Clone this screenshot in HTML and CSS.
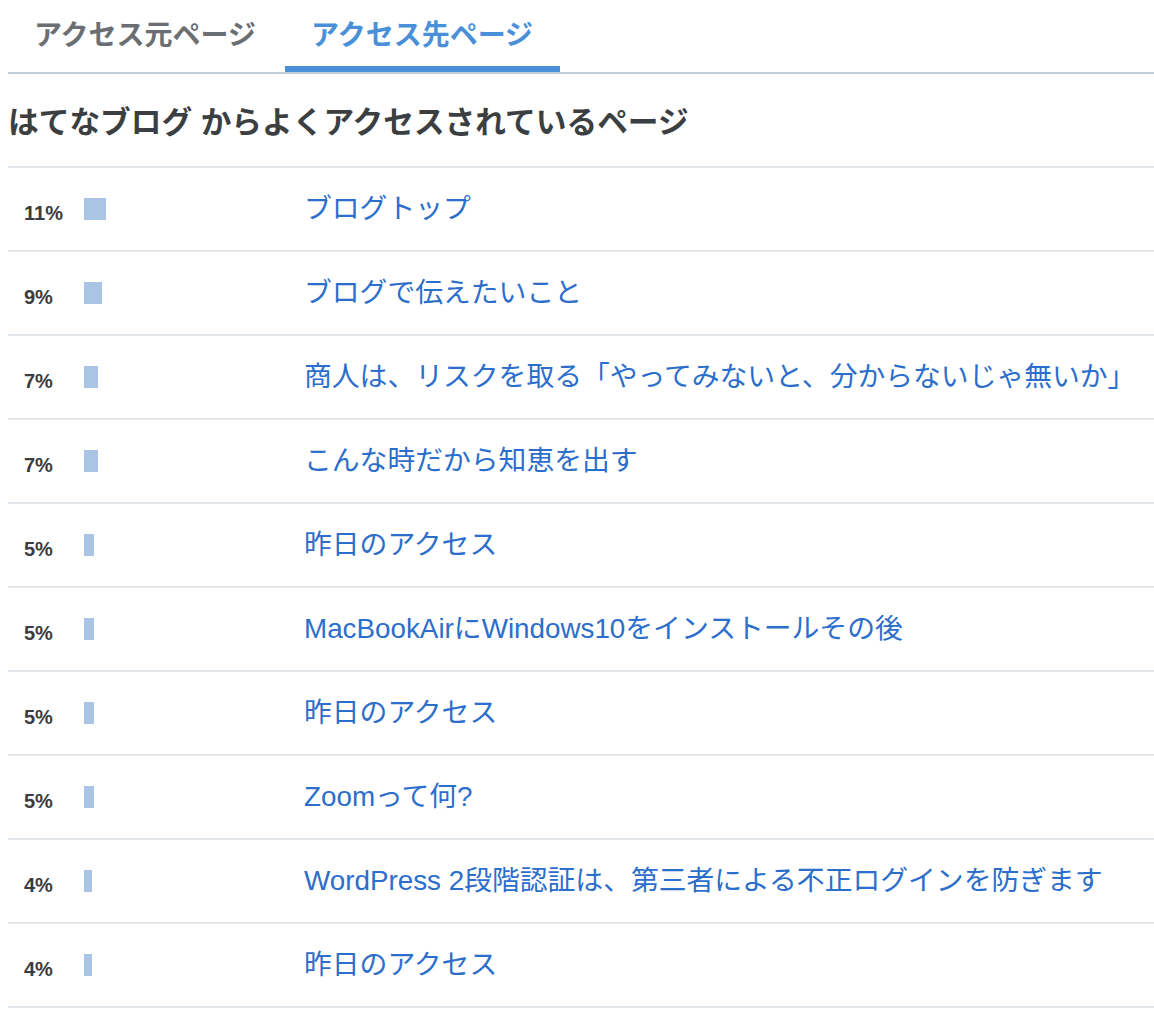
FILE: index.html
```html
<!DOCTYPE html>
<html lang="ja">
<head>
  <meta charset="UTF-8" />
  <meta name="viewport" content="width=device-width, initial-scale=1.0" />
  <title>アクセス先ページ</title>
  <link rel="stylesheet" href="styles.css">
</head>
<body>

  <div class="tabs">
    <div class="tab">アクセス元ページ</div>
    <div class="tab active">アクセス先ページ</div>
  </div>

  <h2 class="heading">はてなブログ からよくアクセスされているページ</h2>

  <div class="rows">
    <div class="row">
      <div class="pct">11%</div>
      <div class="bar-cell"><div class="bar" style="width: 22px"></div></div>
      <a class="link" href="#">ブログトップ</a>
    </div>
    <div class="row">
      <div class="pct">9%</div>
      <div class="bar-cell"><div class="bar" style="width: 18px"></div></div>
      <a class="link" href="#">ブログで伝えたいこと</a>
    </div>
    <div class="row">
      <div class="pct">7%</div>
      <div class="bar-cell"><div class="bar" style="width: 14px"></div></div>
      <a class="link" href="#">商人は、リスクを取る「やってみないと、分からないじゃ無いか」</a>
    </div>
    <div class="row">
      <div class="pct">7%</div>
      <div class="bar-cell"><div class="bar" style="width: 14px"></div></div>
      <a class="link" href="#">こんな時だから知恵を出す</a>
    </div>
    <div class="row">
      <div class="pct">5%</div>
      <div class="bar-cell"><div class="bar" style="width: 10px"></div></div>
      <a class="link" href="#">昨日のアクセス</a>
    </div>
    <div class="row">
      <div class="pct">5%</div>
      <div class="bar-cell"><div class="bar" style="width: 10px"></div></div>
      <a class="link" href="#">MacBookAirにWindows10をインストールその後</a>
    </div>
    <div class="row">
      <div class="pct">5%</div>
      <div class="bar-cell"><div class="bar" style="width: 10px"></div></div>
      <a class="link" href="#">昨日のアクセス</a>
    </div>
    <div class="row">
      <div class="pct">5%</div>
      <div class="bar-cell"><div class="bar" style="width: 10px"></div></div>
      <a class="link" href="#">Zoomって何?</a>
    </div>
    <div class="row">
      <div class="pct">4%</div>
      <div class="bar-cell"><div class="bar" style="width: 8px"></div></div>
      <a class="link" href="#">WordPress 2段階認証は、第三者による不正ログインを防ぎます</a>
    </div>
    <div class="row">
      <div class="pct">4%</div>
      <div class="bar-cell"><div class="bar" style="width: 8px"></div></div>
      <a class="link" href="#">昨日のアクセス</a>
    </div>
  </div>

</body>
</html>
```

FILE: styles.css
```css
* {
  box-sizing: border-box;
}

body {
  font-family: "Liberation Sans", "Noto Sans CJK JP", sans-serif;
  margin: 0 0 0 8px;
  padding: 0;
  background: #fff;
  color: #3c3f42;
}

.tabs {
  display: flex;
  gap: 2px;
  border-bottom: 2px solid #c3ccd4;
}

.tab {
  padding: 16px 27px 10px 26px;
  font-size: 28px;
  line-height: 40px;
  font-weight: bold;
  color: #6b6f73;
  border-bottom: 6px solid transparent;
}

.tab.active {
  color: #4a90d9;
  border-bottom-color: #4a90d9;
}

.heading {
  margin: 0;
  padding: 27px 0 21px;
  font-size: 30.7px;
  line-height: 44px;
  font-weight: bold;
  color: #3c3f42;
  border-bottom: 2px solid #e1e6ea;
}

.row {
  display: flex;
  align-items: center;
  height: 84px;
  padding-left: 16px;
  border-bottom: 2px solid #e1e6ea;
}

.pct {
  width: 60px;
  padding-top: 8px;
  font-size: 20px;
  font-weight: bold;
  color: #3a3c3f;
}

.bar-cell {
  width: 220px;
}

.bar {
  height: 22px;
  background: #aac5e4;
}

.link {
  font-size: 27.8px;
  line-height: 38px;
  color: #2c6ecb;
  text-decoration: none;
  white-space: nowrap;
}
```
